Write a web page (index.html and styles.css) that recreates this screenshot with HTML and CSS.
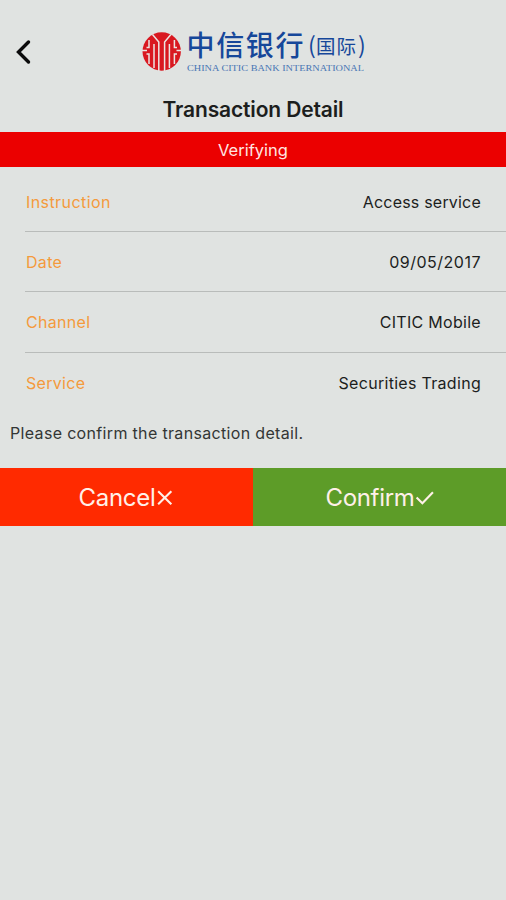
FILE: index.html
```
<!DOCTYPE html>
<html lang="en">
<head>
<meta charset="utf-8">
<title>Transaction Detail</title>
<link rel="stylesheet" href="styles.css">
</head>
<body>
<header class="header">
  <svg class="back" viewBox="0 0 18 28" aria-label="Back"><path d="M13.500 4 3.500 14 13.500 24"/></svg>
  <svg class="logo" viewBox="0 0 230 50" role="img" aria-label="China CITIC Bank International">
    <circle class="mark" cx="21.700" cy="26.500" r="19.200"/>
    <g class="cuts">
      <path d="M12.500 9.500 18.800 17V46M30.900 9.500 24.600 17V46M14 19V43M29.400 19V43"/>
      <path d="M2 25.500H7M41.500 25.500H36.500M9 15V22.500H6.500M34.400 15V22.500H37M9 39V29H6.500M34.400 39V29H37"/>
    </g>
    <text class="cn kai" x="46.500" y="31" textLength="117">中信银行</text>
    <text class="cn" x="168" y="29" font-size="23">(</text>
    <text class="cn" x="176" y="28.500" font-size="19.500" textLength="40">国际</text>
    <text class="cn" x="218" y="29" font-size="23">)</text>
    <text class="en" x="47" y="46" textLength="177" lengthAdjust="spacingAndGlyphs">CHINA CITIC BANK INTERNATIONAL</text>
  </svg>
</header>
<h1 class="title">Transaction Detail</h1>
<div class="status">Verifying</div>
<dl class="details">
  <div class="row"><dt class="instruction">Instruction</dt><dd class="access">Access service</dd></div>
  <div class="row"><dt>Date</dt><dd class="date">09/05/2017</dd></div>
  <div class="row tall"><dt>Channel</dt><dd>CITIC Mobile</dd></div>
  <div class="row"><dt>Service</dt><dd>Securities Trading</dd></div>
</dl>
<p class="message">Please confirm the transaction detail.</p>
<div class="actions">
  <button class="cancel">Cancel<svg viewBox="0 0 18 18"><path d="M3 3 15.500 15.500M15.500 3 3 15.500"/></svg></button>
  <button class="confirm">Confirm<svg viewBox="0 0 18 18"><path d="M1.500 9 7 14.500 17 4"/></svg></button>
</div>
</body>
</html>
```
FILE: styles.css
```
* { box-sizing: border-box; }
body {
  margin: 0;
  min-height: 900px;
  background: #e0e3e1;
  color: #1c1e1d;
  font-family: Inter, "Liberation Sans", sans-serif;
  font-size: 16px;
}
.header {
  display: flex;
  align-items: flex-start;
  height: 90px;
  padding-top: 25px;
}
.back {
  width: 18px;
  height: 28px;
  margin: 13px 103px 0 15px;
  fill: none;
  stroke: #0b0b0b;
  stroke-width: 3.4;
  stroke-linecap: round;
}
.logo { width: 230px; height: 50px; margin-left: 4px; }
.mark { fill: #d91820; }
.cuts { fill: none; stroke: #ece4e2; stroke-width: 1.5; }
.cn { fill: #16479a; font-family: "Noto Sans CJK SC", sans-serif; }
.kai { font-size: 28px; font-weight: 500; }
.en { fill: #4775b4; font-family: "Liberation Serif", serif; font-size: 8.6px; }
.title {
  height: 42px;
  margin: 0;
  font-size: 21px;
  font-weight: 600;
  line-height: 39px;
  letter-spacing: -.15px;
  text-align: center;
}
.status {
  height: 35px;
  margin-bottom: 5px;
  background: #eb0000;
  color: #ffe6e2;
  font-size: 16.5px;
  line-height: 37px;
  text-align: center;
}
.details { margin: 0 0 0 25px; }
.row {
  display: flex;
  justify-content: space-between;
  align-items: center;
  height: 60px;
  padding: 0 25px 0 1px;
  border-bottom: 1px solid #b9bcba;
  letter-spacing: .3px;
}
.tall { height: 61px; }
.row:last-child { border: 0; }
.row dt { color: #f49a3c; }
.row dd { margin: 0; }
.row .instruction { letter-spacing: .42px; }
.row .access { letter-spacing: .2px; }
.row .date { letter-spacing: .5px; }
.message {
  height: 55px;
  margin: 0;
  padding-left: 10px;
  line-height: 40px;
  color: #333635;
  letter-spacing: .33px;
}
.actions { display: flex; height: 58px; }
.actions button {
  display: flex;
  align-items: center;
  justify-content: center;
  flex: 1;
  padding: 0;
  border: 0;
  color: #fff0e8;
  font: 24px Inter, sans-serif;
  letter-spacing: -.3px;
}
.cancel { background: #ff2a00; }
.confirm { background: #5d9c28; }
.actions svg {
  width: 19px;
  height: 19px;
  fill: none;
  stroke: currentColor;
  stroke-width: 2;
}
```
